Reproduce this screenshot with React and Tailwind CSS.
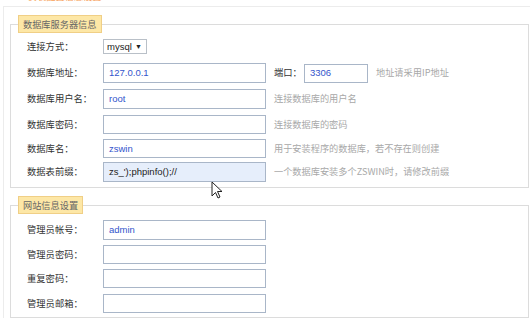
import React from "react";

const CJK = "font-['Noto_Sans_CJK_SC','Noto_Sans',sans-serif]";
const VAL = "font-['Liberation_Sans','Noto_Sans_CJK_SC',sans-serif]";

function Field({ value, h = "h-[20px]", w = "w-[163px]", filled }) {
  return (
    <div
      className={`${w} ${h} shrink-0 border border-[#a9b6c8] flex items-center px-[5px] text-[9.5px] leading-none ${VAL} ${
        filled ? "bg-[#e6eefb] text-[#222]" : "bg-white text-[#3355cc]"
      }`}
    >
      {value}
    </div>
  );
}

function Label({ children }) {
  return (
    <div className={`w-[92px] shrink-0 pl-[16px] whitespace-nowrap text-[9.3px] leading-none text-[#333] ${CJK}`}>
      {children}
    </div>
  );
}

function Hint({ children }) {
  return (
    <div className={`ml-[8px] whitespace-nowrap text-[9.2px] leading-none text-[#a8a8a8] ${CJK}`}>
      {children}
    </div>
  );
}

function Row({ label, value, hint, mt, filled, h }) {
  return (
    <div className={`flex items-center ${mt}`}>
      <Label>{label}</Label>
      <Field value={value} h={h} filled={filled} />
      {hint && <Hint>{hint}</Hint>}
    </div>
  );
}

function Legend({ children }) {
  return (
    <legend
      className={`ml-[7px] h-[18px] px-[4px] bg-[#fde7a6] border border-[#f0cf86] text-[9.2px] leading-[16px] text-[#666] whitespace-nowrap ${CJK}`}
    >
      {children}
    </legend>
  );
}

export default function App() {
  return (
    <div className="w-[530px] h-[327px] bg-white relative overflow-hidden">
      <div className="h-[6px] relative overflow-hidden">
        <div className={`absolute left-[28px] top-[-8px] text-[9.2px] leading-none text-[#f7a15a] ${CJK}`}>
          安装配置信息设置
        </div>
      </div>
      <div className="ml-[3px] border-t border-l border-[#ececec] pt-[8px] pl-[6px] pr-[1px]">
        <fieldset className="border border-[#dcdcdc] pb-[5px]">
          <Legend>数据库服务器信息</Legend>
          <div className="flex items-center mt-[6px]">
            <Label>连接方式：</Label>
            <div
              className={`h-[15px] w-[44px] border border-[#b9c0c8] flex items-center justify-between pl-[3px] pr-[4px] text-[9.5px] leading-none text-[#222] ${VAL}`}
            >
              <span>mysql</span>
              <span className="text-[7px]">▼</span>
            </div>
          </div>
          <div className="flex items-center mt-[9px]">
            <Label>数据库地址：</Label>
            <Field value="127.0.0.1" />
            <div className={`ml-[8px] w-[30px] whitespace-nowrap text-[9.3px] leading-none text-[#333] ${CJK}`}>
              端口：
            </div>
            <Field value="3306" w="w-[64px]" h="h-[19px]" />
            <Hint>地址请采用IP地址</Hint>
          </div>
          <Row label="数据库用户名：" value="root" hint="连接数据库的用户名" mt="mt-[6px]" />
          <Row label="数据库密码：" value="" hint="连接数据库的密码" mt="mt-[6px]" h="h-[19px]" />
          <Row
            label="数据库名："
            value="zswin"
            hint="用于安装程序的数据库，若不存在则创建"
            mt="mt-[5px]"
            h="h-[19px]"
          />
          <Row
            label="数据表前缀："
            value="zs_');phpinfo();//"
            hint="一个数据库安装多个ZSWIN时，请修改前缀"
            mt="mt-[4px]"
            filled
          />
        </fieldset>
        <fieldset className="mt-[8px] border border-[#dcdcdc] pb-[4px]">
          <Legend>网站信息设置</Legend>
          <Row label="管理员帐号：" value="admin" mt="mt-[6px]" />
          <Row label="管理员密码：" value="" mt="mt-[5px]" h="h-[19px]" />
          <Row label="重复密码：" value="" mt="mt-[5px]" h="h-[19px]" />
          <Row label="管理员邮箱：" value="" mt="mt-[6px]" h="h-[19px]" />
        </fieldset>
      </div>
      <svg className="absolute left-[211px] top-[181px]" width="12" height="19" viewBox="0 0 12 19">
        <path
          d="M1 1 L1 15 L4.5 11.5 L7 17 L9 16 L6.5 10.5 L11 10.5 Z"
          fill="white"
          stroke="#222"
          strokeWidth="1"
          strokeLinejoin="round"
        />
      </svg>
    </div>
  );
}
